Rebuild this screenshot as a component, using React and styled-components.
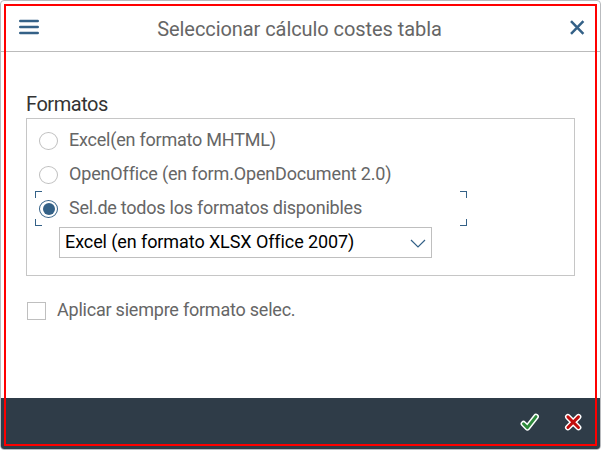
import React from "react";
import styled, { createGlobalStyle } from "styled-components";

const GlobalStyle = createGlobalStyle`
  *, *::before, *::after { box-sizing: border-box; }
  body { margin: 0; background: #fff; overflow: hidden; font-family: Roboto, "Liberation Sans", sans-serif; }
`;

const Dialog = styled.section`
  position: relative;
  display: flex;
  flex-direction: column;
  width: 601px;
  height: 450px;
  border: 1px solid #b9bbbe;
  border-radius: 4px;
  background: #fff;
  overflow: hidden;
`;

const Highlight = styled.div`
  position: absolute;
  inset: 3px;
  border: 2px solid #ff0000;
  pointer-events: none;
`;

const Header = styled.header`
  display: grid;
  grid-template-columns: 56px 1fr 58px;
  align-items: center;
  flex: none;
  height: 51px;
  border-bottom: 1px solid #bbb;
`;

const IconButton = styled.button`
  display: flex;
  justify-content: ${(p) => p.$align || "center"};
  margin: ${(p) => p.$margin || 0};
  padding: 0;
  border: 0;
  background: none;
  svg { display: block; }
`;

const Title = styled.h1`
  margin: 5px 0 0;
  font-size: 20px;
  font-weight: 400;
  line-height: 24px;
  letter-spacing: ${(p) => p.$spacing}px;
  text-align: center;
  white-space: nowrap;
  color: #666;
`;

const Body = styled.main`
  flex: 1;
  padding: 40px 25px 0;
`;

const GroupTitle = styled.h2`
  margin: 0;
  height: 26px;
  font-size: 20px;
  font-weight: 400;
  line-height: 24px;
  letter-spacing: ${(p) => p.$spacing}px;
  color: #333;
`;

const Group = styled.div`
  width: 549px;
  height: 158px;
  padding: 4px 8px;
  border: 1px solid #c6c6c6;
`;

const Option = styled.label`
  position: relative;
  display: flex;
  align-items: center;
  width: 432px;
  height: 34px;
  padding-left: 4px;
`;

const Radio = styled.span`
  display: grid;
  place-items: center;
  width: 19px;
  height: 18px;
  margin: 2px 11px 0 0;
  border: 1px solid ${(p) => (p.$checked ? "#346187" : "#bfbfbf")};
  border-radius: 50%;
  &::after {
    content: "";
    width: 12px;
    height: 12px;
    border-radius: 50%;
    background: ${(p) => (p.$checked ? "#346187" : "transparent")};
  }
`;

const LabelText = styled.span`
  font-size: 18px;
  line-height: 22px;
  letter-spacing: ${(p) => p.$spacing}px;
  white-space: nowrap;
  color: ${(p) => p.$color || "#666"};
`;

const FocusCorner = styled.i`
  position: absolute;
  width: 7px;
  height: 7px;
  border: 0 solid #346187;
  ${(p) => p.$v}: ${(p) => (p.$v === "bottom" ? "-1px" : "0")};
  ${(p) => p.$h}: 0;
  border-${(p) => p.$v}-width: 1px;
  border-${(p) => p.$h}-width: 1px;
`;

const Select = styled.div`
  display: flex;
  align-items: center;
  justify-content: space-between;
  width: 373px;
  height: 31px;
  margin: 2px 0 0 24px;
  padding: 0 5px;
  border: 1px solid #bfbfbf;
  ${LabelText} { margin-bottom: 2px; }
`;

const CheckRow = styled.label`
  display: flex;
  align-items: center;
  height: 22px;
  margin-top: 23px;
`;

const Checkbox = styled.span`
  width: 19px;
  height: 18px;
  margin: 2px 11px 0 1px;
  border: 1px solid #bfbfbf;
`;

const Footer = styled.footer`
  display: flex;
  align-items: center;
  justify-content: flex-end;
  gap: 23px;
  flex: none;
  height: 51px;
  padding: 0 17px 3px 0;
  background: #2f3c48;
`;

const checkPath = "M3.5 11.7 L7.4 15.6 L16 4.6";
const crossPath = "M4.9 4.9 L15.5 15.5 M15.5 4.9 L4.9 15.5";

function ActionIcon({ path, color }) {
  return (
    <svg width="20" height="20" viewBox="0 0 20 20" fill="none" strokeLinejoin="round">
      <path d={path} stroke="#fff" strokeWidth="5.8" strokeLinecap="round" />
      <path d={path} stroke={color} strokeWidth="2.9" strokeLinecap="round" />
    </svg>
  );
}

const options = [
  { text: "Excel(en formato MHTML)", spacing: -0.22 },
  { text: "OpenOffice (en form.OpenDocument 2.0)", spacing: -0.16 },
  { text: "Sel.de todos los formatos disponibles", spacing: -0.24, checked: true },
];

export default function App() {
  return (
    <>
      <GlobalStyle />
      <Dialog>
        <Header>
          <IconButton $align="flex-start" $margin="2px 0 0 18px" aria-label="Menú">
            <svg width="20" height="16" viewBox="0 0 20 16" stroke="#346187" strokeWidth="2.6" strokeLinecap="round">
              <path d="M1.3 2h17.4M1.3 8h17.4M1.3 14h17.4" />
            </svg>
          </IconButton>
          <Title $spacing={-0.07}>Seleccionar cálculo costes tabla</Title>
          <IconButton $align="flex-end" $margin="3px 15px 0 0" aria-label="Cerrar">
            <svg width="15" height="15" viewBox="0 0 15 15" stroke="#346187" strokeWidth="2.5" fill="none">
              <path d="M1 1.2 13.4 13.8M13.4 1.2 1 13.8" />
            </svg>
          </IconButton>
        </Header>
        <Body>
          <GroupTitle $spacing={-0.45}>Formatos</GroupTitle>
          <Group>
            {options.map((o) => (
              <Option key={o.text}>
                <Radio $checked={o.checked} />
                <LabelText $spacing={o.spacing}>{o.text}</LabelText>
                {o.checked && (
                  <>
                    <FocusCorner $v="top" $h="left" />
                    <FocusCorner $v="top" $h="right" />
                    <FocusCorner $v="bottom" $h="left" />
                    <FocusCorner $v="bottom" $h="right" />
                  </>
                )}
              </Option>
            ))}
            <Select>
              <LabelText $spacing={-0.09} $color="#000">Excel (en formato XLSX Office 2007)</LabelText>
              <svg width="16" height="10" viewBox="0 0 16 10" fill="none" stroke="#346187" strokeWidth="1.2">
                <path d="M1 2 8 9 15 2" />
              </svg>
            </Select>
          </Group>
          <CheckRow>
            <Checkbox />
            <LabelText $spacing={-0.22}>Aplicar siempre formato selec.</LabelText>
          </CheckRow>
        </Body>
        <Footer>
          <IconButton aria-label="Aceptar"><ActionIcon path={checkPath} color="#2f8a3c" /></IconButton>
          <IconButton aria-label="Cancelar"><ActionIcon path={crossPath} color="#c00d0d" /></IconButton>
        </Footer>
        <Highlight />
      </Dialog>
    </>
  );
}
